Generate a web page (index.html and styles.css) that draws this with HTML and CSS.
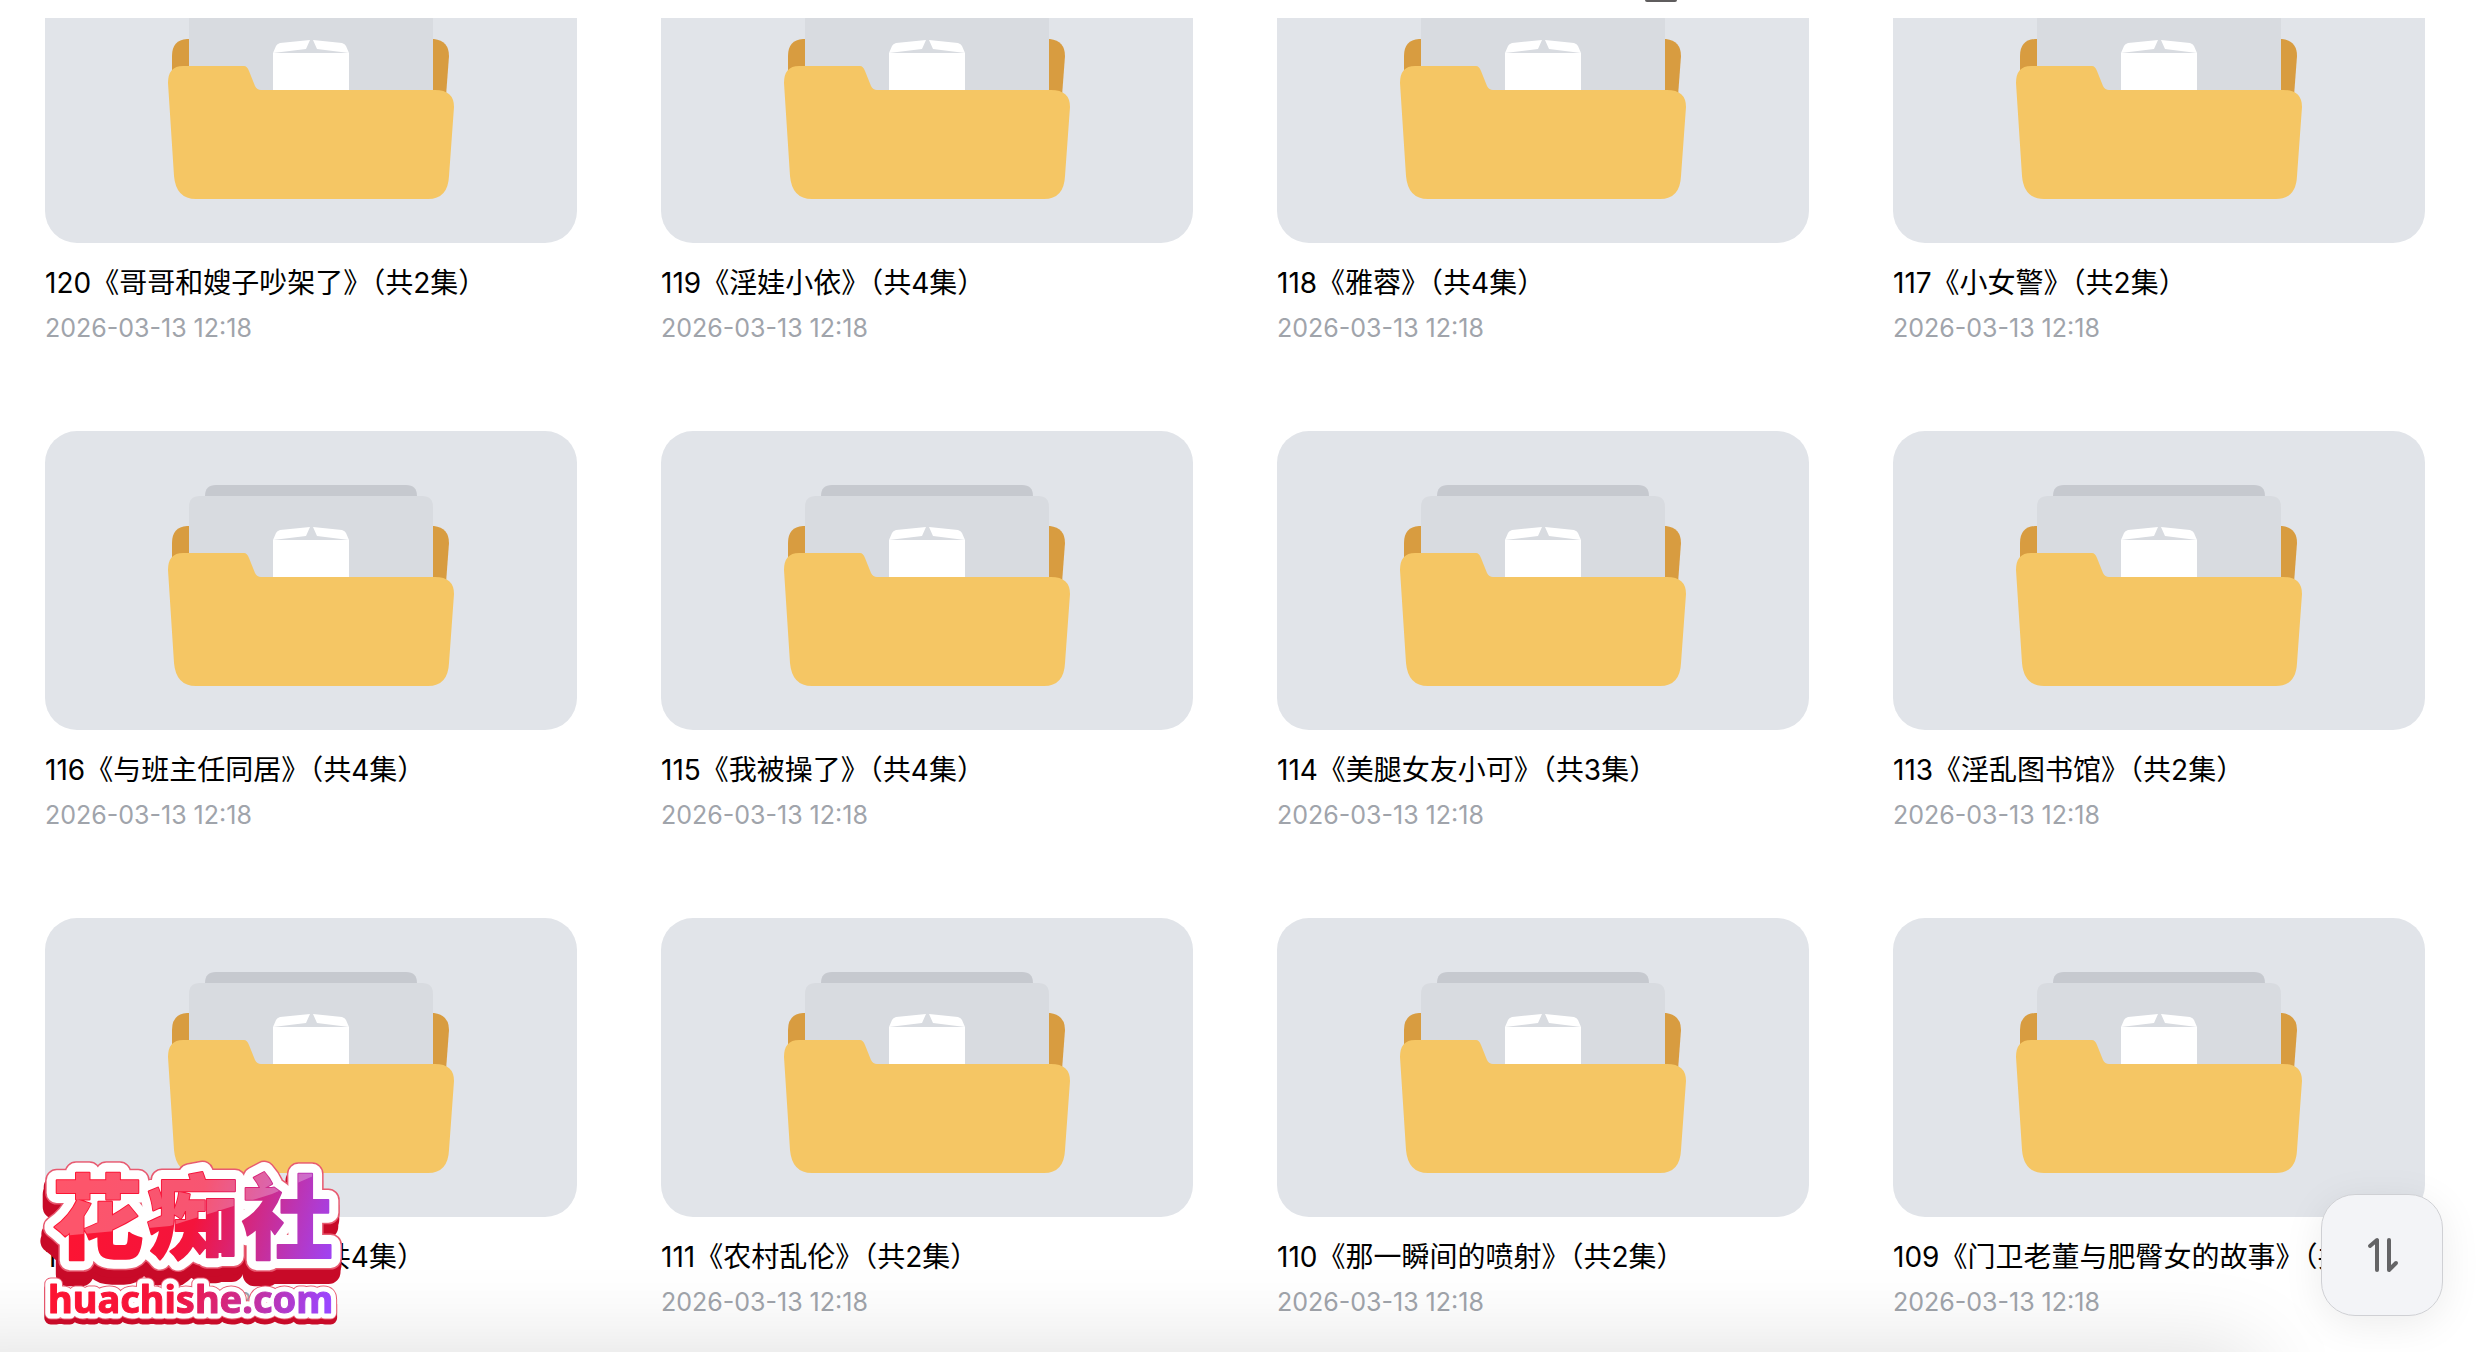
FILE: index.html
```html
<!DOCTYPE html>
<html lang="zh-CN">
<head>
    <meta charset="UTF-8">
    <meta name="viewport" content="width=device-width, initial-scale=1.0">
    <title>文件列表</title>
    <link rel="stylesheet" href="styles.css">
</head>
<body>
    <!-- Shared folder drawing -->
    <svg class="defs" width="0" height="0" aria-hidden="true">
        <symbol id="folder" viewBox="0 0 532 299">
            <path fill="#c6c9cf" d="M160 70V65q0-11 11-11H361q11 0 11 11V70z"/>
            <path fill="#d89c40" d="M127 130V112q0-16 15-17H389q15 2 15 17l-3 40H129z"/>
            <path fill="#d8dbe0" d="M144 160V76q0-11 11-11H377q11 0 11 11V160z"/>
            <path fill="#fff" d="M228 160V109h76v51z"/>
            <path fill="#fff" d="M228 109l3-7q1-2 4-3l30-3-4 9zM304 109l-3-7q-1-2-4-3l-29-3 4 9z"/>
            <path fill="#f5c664" d="M123 139q0-17 15-17h61q3 0 5 5l6 15q2 4 6 4H390q19 0 19 17l-5 69q-1 23-21 23H151q-20 0-22-23z"/>
        </symbol>
    </svg>

    <header class="topbar"><span class="handle"></span></header>

    <main class="file-list">
        <div class="file-grid">
            <a class="file-item" href="#">
                <svg class="file-thumb"><use href="#folder"/></svg>
                <span class="file-name">120《哥哥和嫂子吵架了》（共2集）</span>
                <time class="file-time">2026-03-13 12:18</time>
            </a>
            <a class="file-item" href="#">
                <svg class="file-thumb"><use href="#folder"/></svg>
                <span class="file-name">119《淫娃小依》（共4集）</span>
                <time class="file-time">2026-03-13 12:18</time>
            </a>
            <a class="file-item" href="#">
                <svg class="file-thumb"><use href="#folder"/></svg>
                <span class="file-name">118《雅蓉》（共4集）</span>
                <time class="file-time">2026-03-13 12:18</time>
            </a>
            <a class="file-item" href="#">
                <svg class="file-thumb"><use href="#folder"/></svg>
                <span class="file-name">117《小女警》（共2集）</span>
                <time class="file-time">2026-03-13 12:18</time>
            </a>
            <a class="file-item" href="#">
                <svg class="file-thumb"><use href="#folder"/></svg>
                <span class="file-name">116《与班主任同居》（共4集）</span>
                <time class="file-time">2026-03-13 12:18</time>
            </a>
            <a class="file-item" href="#">
                <svg class="file-thumb"><use href="#folder"/></svg>
                <span class="file-name">115《我被操了》（共4集）</span>
                <time class="file-time">2026-03-13 12:18</time>
            </a>
            <a class="file-item" href="#">
                <svg class="file-thumb"><use href="#folder"/></svg>
                <span class="file-name">114《美腿女友小可》（共3集）</span>
                <time class="file-time">2026-03-13 12:18</time>
            </a>
            <a class="file-item" href="#">
                <svg class="file-thumb"><use href="#folder"/></svg>
                <span class="file-name">113《淫乱图书馆》（共2集）</span>
                <time class="file-time">2026-03-13 12:18</time>
            </a>
            <a class="file-item" href="#">
                <svg class="file-thumb"><use href="#folder"/></svg>
                <span class="file-name">112《与同学的旅行》（共4集）</span>
                <time class="file-time">2026-03-13 12:18</time>
            </a>
            <a class="file-item" href="#">
                <svg class="file-thumb"><use href="#folder"/></svg>
                <span class="file-name">111《农村乱伦》（共2集）</span>
                <time class="file-time">2026-03-13 12:18</time>
            </a>
            <a class="file-item" href="#">
                <svg class="file-thumb"><use href="#folder"/></svg>
                <span class="file-name">110《那一瞬间的喷射》（共2集）</span>
                <time class="file-time">2026-03-13 12:18</time>
            </a>
            <a class="file-item" href="#">
                <svg class="file-thumb"><use href="#folder"/></svg>
                <span class="file-name">109《门卫老董与肥臀女的故事》（共2集）</span>
                <time class="file-time">2026-03-13 12:18</time>
            </a>
        </div>
    </main>

    <div class="bottom-bar"></div>

    <!-- Site badge -->
    <svg class="badge" viewBox="0 0 310 170" width="310" height="170" role="img" aria-label="花痴社 huachishe.com">
        <defs>
            <linearGradient id="ink" gradientUnits="userSpaceOnUse" x1="10" y1="20" x2="300" y2="100">
                <stop offset="0" stop-color="#ff1430"/>
                <stop offset=".5" stop-color="#f4143c"/>
                <stop offset=".72" stop-color="#cc2c90"/>
                <stop offset="1" stop-color="#9a46ff"/>
            </linearGradient>
            <clipPath id="gloss"><path d="M0 0H310L232 34 130 66 0 78z"/></clipPath>
            <text id="cn" class="badge-cn" x="12 107 202" y="91">花痴社</text>
            <text id="en" class="badge-en" x="8" y="153">huachishe.com</text>
        </defs>
        <g fill="#c80a28" stroke="#c80a28" stroke-linejoin="round">
            <use href="#cn" x="-2" y="14" stroke-width="24"/>
            <use href="#cn" x="-1" y="7" stroke-width="24"/>
            <use href="#en" y="5" stroke-width="13"/>
        </g>
        <g fill="#e85a70" stroke="#e85a70" stroke-linejoin="round">
            <use href="#cn" stroke-width="23"/>
            <use href="#en" stroke-width="13"/>
        </g>
        <g fill="#fff" stroke="#fff" stroke-linejoin="round">
            <use href="#cn" stroke-width="20"/>
            <use href="#en" stroke-width="11"/>
        </g>
        <g fill="url(#ink)" stroke="url(#ink)" stroke-linejoin="round">
            <use href="#cn" stroke-width="2"/>
            <use href="#en" stroke-width="1"/>
        </g>
        <g fill="#fff" fill-opacity=".28" clip-path="url(#gloss)">
            <use href="#cn"/>
        </g>
    </svg>

    <button class="sort-btn" type="button" aria-label="排序">
        <svg viewBox="0 0 40 40" width="40" height="40" fill="none" stroke="#646466" stroke-width="4" stroke-linecap="round" stroke-linejoin="round">
            <path d="M8 11l7-6v30M27 5v30l7-7"/>
        </svg>
    </button>
</body>
</html>
```
FILE: styles.css
```css
* { box-sizing: border-box; }
body {
    margin: 0;
    height: 100vh;
    display: flex;
    flex-direction: column;
    overflow: hidden;
    background-color: #fff;
    font-family: Inter, "Noto Sans CJK SC", sans-serif;
}
.defs { position: absolute; }

.topbar { flex: none; height: 18px; padding-left: 1645px; }
.handle { display: block; width: 32px; height: 2px; background-color: #5f5d5e; border-radius: 0 0 4px 4px; }

.file-list { flex: 1; min-height: 0; overflow: hidden; padding: 0 51px 0 45px; }
/* list is scrolled part of the way through a row */
.file-grid { display: grid; grid-template-columns: repeat(4, 1fr); gap: 86px 84px; margin-top: -74px; }
.file-item { display: flex; flex-direction: column; min-width: 0; color: #000; text-decoration: none; }
.file-thumb { display: block; width: 100%; aspect-ratio: 532 / 299; background-color: #e1e4e9; border-radius: 32px; }
.file-name {
    margin-top: 20px;
    font-size: 28px;
    line-height: 40px;
    white-space: nowrap;
    overflow: hidden;
    text-overflow: ellipsis;
}
.file-time { margin-top: 8px; font-size: 25px; line-height: 34px; color: #a0a4ab; }

.bottom-bar {
    position: fixed;
    top: 100%;
    left: -100px;
    right: 220px;
    height: 120px;
    box-shadow: 0 0 90px rgba(0, 0, 0, 0.14);
}

.badge { position: fixed; left: 40px; bottom: 22px; overflow: visible; }
.badge-cn { font-family: "Noto Sans CJK SC", sans-serif; font-weight: 900; font-size: 91px; }
.badge-en { font-family: "Noto Sans", sans-serif; font-weight: 700; font-size: 38px; }

.sort-btn {
    position: fixed;
    right: 33px;
    bottom: 36px;
    width: 122px;
    height: 122px;
    padding: 0;
    display: flex;
    align-items: center;
    justify-content: center;
    background-color: #f3f4f7;
    border: 1px solid #cfd0d4;
    border-radius: 34px;
    box-shadow: 0 8px 40px rgba(0, 0, 0, 0.08);
    cursor: pointer;
}
```
